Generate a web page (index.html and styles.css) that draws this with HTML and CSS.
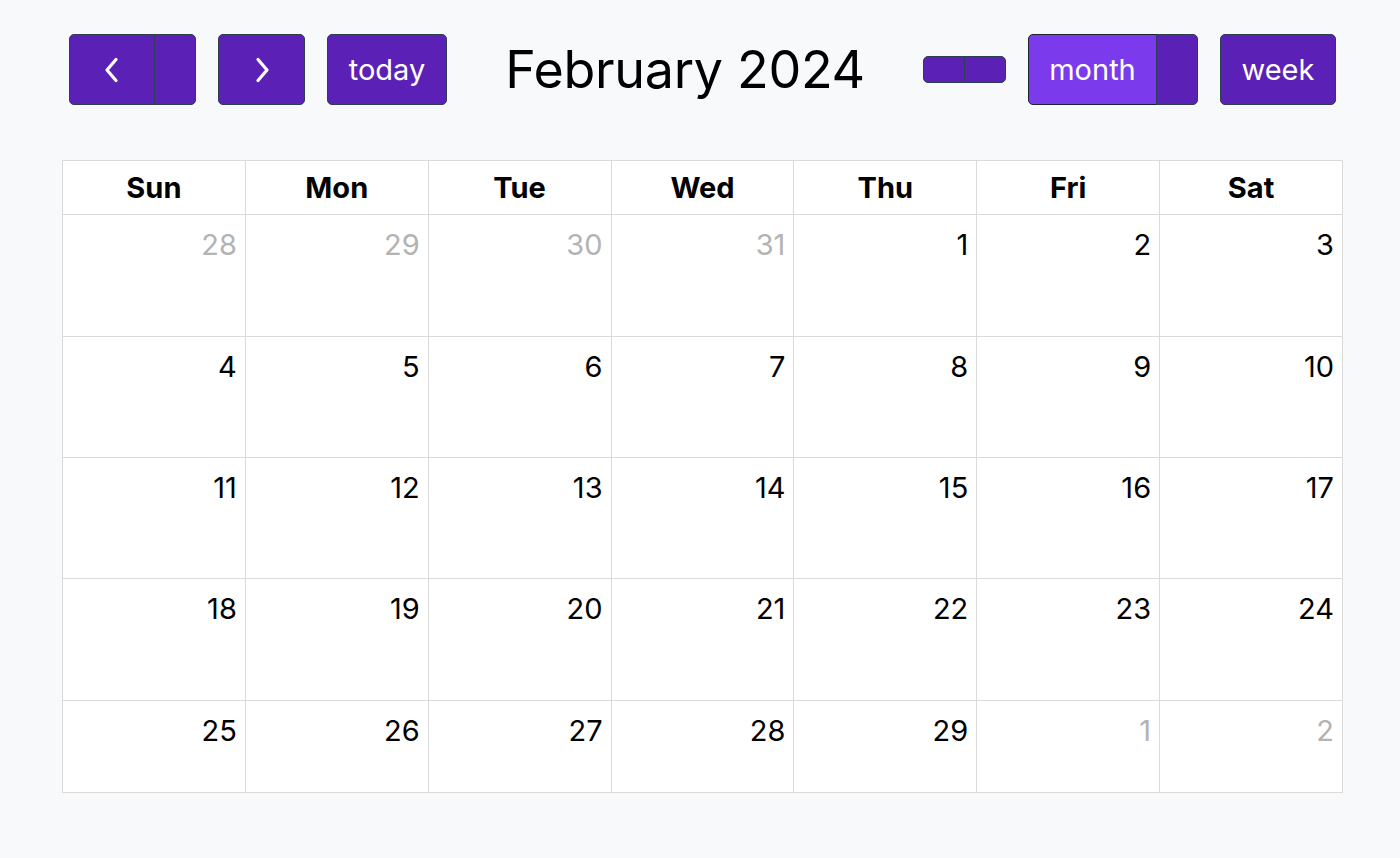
FILE: index.html
```html
<!DOCTYPE html>
<html lang="en">
<head>
<meta charset="utf-8">
<title>February 2024</title>
<link rel="stylesheet" href="styles.css">
</head>
<body>
<div class="cal">
  <div class="toolbar">
    <div class="chunk">
      <div class="group">
        <button class="btn btn-prev" aria-label="prev">
          <svg width="18" height="26" viewBox="0 0 18 26"><polyline points="13,2.5 4,13 13,23.5" fill="none" stroke="#fff" stroke-width="3.2" stroke-linecap="round" stroke-linejoin="round"/></svg>
        </button>
        <button class="btn btn-empty"></button>
      </div>
      <button class="btn btn-next" aria-label="next">
        <svg width="18" height="26" viewBox="0 0 18 26"><polyline points="5,2.5 14,13 5,23.5" fill="none" stroke="#fff" stroke-width="3.2" stroke-linecap="round" stroke-linejoin="round"/></svg>
      </button>
      <button class="btn btn-text">today</button>
    </div>
    <h2 class="title">February 2024</h2>
    <div class="chunk">
      <div class="group small">
        <button class="btn btn-empty"></button>
        <button class="btn btn-empty"></button>
      </div>
      <div class="group">
        <button class="btn btn-text btn-active btn-month">month</button>
        <button class="btn btn-empty"></button>
      </div>
      <button class="btn btn-text btn-week">week</button>
    </div>
  </div>

  <div class="grid">
    <div class="head">Sun</div><div class="head">Mon</div><div class="head">Tue</div><div class="head">Wed</div><div class="head">Thu</div><div class="head">Fri</div><div class="head">Sat</div>

    <div class="day other">28</div><div class="day other">29</div><div class="day other">30</div><div class="day other">31</div><div class="day">1</div><div class="day">2</div><div class="day">3</div>
    <div class="day">4</div><div class="day">5</div><div class="day">6</div><div class="day">7</div><div class="day">8</div><div class="day">9</div><div class="day">10</div>
    <div class="day">11</div><div class="day">12</div><div class="day">13</div><div class="day">14</div><div class="day">15</div><div class="day">16</div><div class="day">17</div>
    <div class="day">18</div><div class="day">19</div><div class="day">20</div><div class="day">21</div><div class="day">22</div><div class="day">23</div><div class="day">24</div>
    <div class="day">25</div><div class="day">26</div><div class="day">27</div><div class="day">28</div><div class="day">29</div><div class="day other">1</div><div class="day other">2</div>
  </div>
</div>
</body>
</html>
```

FILE: styles.css
```css
* { box-sizing: border-box; }

html, body {
  margin: 0;
  padding: 0;
  background: #f8f9fb;
  font-family: Inter, "Noto Sans", "Liberation Sans", sans-serif;
  color: #000;
}

.cal {
  padding: 34px 57px 0 62px;
}

.toolbar {
  display: flex;
  align-items: center;
  justify-content: space-between;
  padding: 0 7px;
  height: 71px;
  margin-bottom: 55px;
}

.chunk {
  display: flex;
  align-items: center;
  gap: 22px;
}

.group {
  display: flex;
  align-items: stretch;
}

.btn {
  display: flex;
  align-items: center;
  justify-content: center;
  height: 71px;
  padding: 0 20px;
  margin: 0;
  background: #5b21b6;
  border: 1px solid #2c3e50;
  border-radius: 5px;
  color: #fff;
  font-family: inherit;
  font-size: 29px;
  line-height: 1;
  cursor: pointer;
}

.group .btn + .btn {
  margin-left: -1px;
  border-top-left-radius: 0;
  border-bottom-left-radius: 0;
}

.group .btn:first-child {
  border-top-right-radius: 0;
  border-bottom-right-radius: 0;
}

.btn-prev { width: 86px; }
.btn-next { width: 87px; }
.btn-empty { width: 42px; padding: 0; }
.btn-text { width: 120px; padding-bottom: 1px; }
.btn-month { width: 129px; }
.btn-week { width: 116px; }

.btn-active {
  background: #7c3aed;
  border-color: #1a252f;
}

.group.small .btn {
  height: 27px;
}
.group.small .btn:first-child { width: 42px; }
.group.small .btn + .btn { width: 42px; }

.title {
  margin: 0;
  font-size: 52px;
  font-weight: 400;
  letter-spacing: -0.3px;
  color: #000;
}

.grid {
  display: grid;
  grid-template-columns: repeat(7, 1fr);
  grid-template-rows: 54px 122px 121px 121px 122px 92px;
  width: 1281px;
  background: #fff;
  border-left: 1px solid #dadada;
  border-top: 1px solid #dadada;
}

.head, .day {
  border-right: 1px solid #dadada;
  border-bottom: 1px solid #dadada;
}

.head {
  display: flex;
  align-items: center;
  justify-content: center;
  font-size: 29px;
  font-weight: 700;
  padding-bottom: 1px;
}

.day {
  text-align: right;
  font-size: 29px;
  padding: 13px 8px 0 0;
  line-height: 1.2;
}

.day.other {
  color: #b3b3b3;
}
```
